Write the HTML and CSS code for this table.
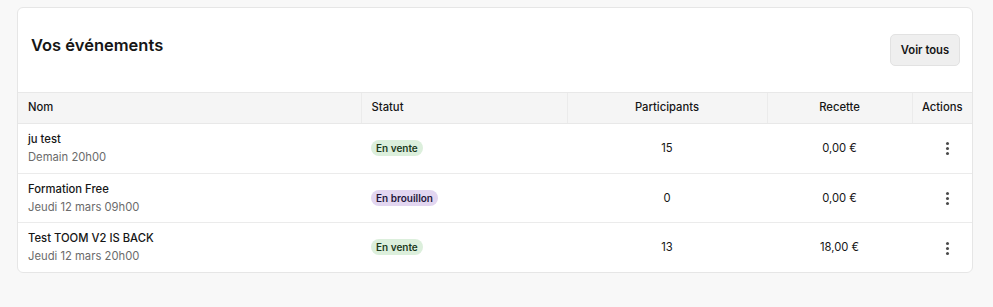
FILE: index.html
```html
<!DOCTYPE html>
<html lang="fr">
<head>
<meta charset="utf-8">
<title>Vos événements</title>
<link rel="stylesheet" href="styles.css">
</head>
<body>
<section class="card">
  <header class="card-head">
    <h2 class="title">Vos événements</h2>
    <button class="btn">Voir tous</button>
  </header>
  <table class="events">
    <colgroup>
      <col class="c-nom"><col class="c-statut"><col class="c-part"><col class="c-rec"><col class="c-act">
    </colgroup>
    <thead>
      <tr>
        <th class="left">Nom</th>
        <th class="left">Statut</th>
        <th>Participants</th>
        <th>Recette</th>
        <th>Actions</th>
      </tr>
    </thead>
    <tbody>
      <tr>
        <td class="left"><div class="name">ju test</div><div class="date">Demain 20h00</div></td>
        <td class="left"><span class="badge sale">En vente</span></td>
        <td>15</td>
        <td>0,00 €</td>
        <td><span class="more"><i></i><i></i><i></i></span></td>
      </tr>
      <tr>
        <td class="left"><div class="name">Formation Free</div><div class="date">Jeudi 12 mars 09h00</div></td>
        <td class="left"><span class="badge draft">En brouillon</span></td>
        <td>0</td>
        <td>0,00 €</td>
        <td><span class="more"><i></i><i></i><i></i></span></td>
      </tr>
      <tr>
        <td class="left"><div class="name">Test TOOM V2 IS BACK</div><div class="date">Jeudi 12 mars 20h00</div></td>
        <td class="left"><span class="badge sale">En vente</span></td>
        <td>13</td>
        <td>18,00 €</td>
        <td><span class="more"><i></i><i></i><i></i></span></td>
      </tr>
    </tbody>
  </table>
</section>
</body>
</html>
```
FILE: styles.css
```css
html, body {
  margin: 0;
  background: #f8f8f8;
}
body {
  padding: 7px 20px 0 17px;
  font-family: Inter, "Noto Sans", sans-serif;
  color: #161616;
}
.card {
  background: #fff;
  border: 1px solid #e6e6e6;
  border-radius: 6px;
  overflow: hidden;
}
.card-head {
  display: flex;
  justify-content: space-between;
  align-items: flex-start;
  padding: 26px 12px 26px 13px;
}
.title {
  margin: 0;
  font-size: 16.5px;
  line-height: 22px;
  font-weight: 600;
  color: #161616;
}
.btn {
  height: 32px;
  width: 70px;
  padding: 0;
  font-family: inherit;
  font-size: 11.25px;
  font-weight: 600;
  color: #161616;
  background: #efefef;
  border: 1px solid #e2e2e2;
  border-radius: 5px;
}
.events {
  width: 100%;
  border-collapse: collapse;
  table-layout: fixed;
  font-size: 11.25px;
  line-height: 16px;
}
.c-nom { width: 343px; }
.c-statut { width: 206px; }
.c-part { width: 200px; }
.c-rec { width: 145px; }
.c-act { width: 60px; }
th {
  background: #f5f5f5;
  font-weight: 500;
  padding: 6px 0 8px;
  text-align: center;
  border-top: 1px solid #e8e8e8;
  border-bottom: 1px solid #e8e8e8;
  border-left: 1px solid #ebebeb;
  white-space: nowrap;
}
th:first-child { border-left: none; }
td {
  text-align: center;
  vertical-align: middle;
  padding: 6px 0 6.67px;
  border-bottom: 1px solid #ebebeb;
}
tbody tr:last-child td { border-bottom: none; }
.left {
  text-align: left;
  padding-left: 10px;
}
.name {
  font-weight: 500;
  line-height: 18px;
  color: #161616;
}
.date {
  line-height: 18px;
  color: #6b6b6b;
}
.badge {
  display: inline-block;
  font-size: 10px;
  font-weight: 600;
  line-height: 16px;
  padding: 0 5px;
  border-radius: 8px;
}
.sale {
  background: #dcefdc;
  color: #1d3a1d;
}
.draft {
  background: #e2d6f0;
  color: #24163a;
}
.more {
  display: inline-flex;
  flex-direction: column;
  gap: 2px;
  margin-left: 10px;
  vertical-align: middle;
}
.more i {
  display: block;
  width: 3px;
  height: 3px;
  border-radius: 50%;
  background: #4a4a4a;
}
```
